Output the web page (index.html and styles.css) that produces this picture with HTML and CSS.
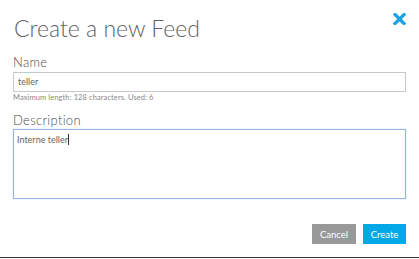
FILE: index.html
```html
<!DOCTYPE html>
<html>
<head>
<meta charset="utf-8">
<link rel="stylesheet" href="styles.css">
</head>
<body>
<div class="dialog">
  <div class="header">
    <h1 class="title">Create a new Feed</h1>
    <span class="close" aria-label="Close">
      <svg width="13" height="12" viewBox="0 0 13 12"><path d="M2 1.5 L11 10.5 M11 1.5 L2 10.5" stroke="#1aa3e0" stroke-width="3.2" stroke-linecap="square"/></svg>
    </span>
  </div>
  <label class="label">Name</label>
  <div class="input">teller</div>
  <div class="hint">Maximum length: 128 characters. Used: 6</div>
  <label class="label label-desc">Description</label>
  <div class="textarea">Interne teller<span class="caret"></span></div>
  <div class="actions">
    <button class="btn btn-cancel">Cancel</button>
    <button class="btn btn-create">Create</button>
  </div>
</div>
<div class="bottom-line"></div>
</body>
</html>
```

FILE: styles.css
```css
html, body {
  margin: 0;
  padding: 0;
  background: #fff;
}
body {
  width: 419px;
  height: 259px;
  position: relative;
  overflow: hidden;
  font-family: Lato, "Liberation Sans", sans-serif;
  color: #555;
}
.dialog {
  padding: 0 13px;
}
.header {
  display: flex;
  justify-content: space-between;
  align-items: flex-start;
  height: 54px;
}
.title {
  margin: 14px 0 0 1px;
  font-weight: 300;
  font-size: 23px;
  line-height: 28px;
  color: #5f5f5f;
  letter-spacing: 0;
}
.close {
  display: block;
  margin-top: 13px;
  width: 13px;
  height: 12px;
}
.close svg { display: block; }
.label {
  display: block;
  font-size: 13px;
  font-weight: 300;
  line-height: 16px;
  color: #4a4a4a;
  letter-spacing: 0.3px;
}
.input {
  box-sizing: border-box;
  margin-top: 2px;
  height: 20px;
  border: 1px solid #c8c8c8;
  font-size: 9px;
  line-height: 18px;
  padding: 0 4px;
  color: #666;
}
.hint {
  font-size: 7.5px;
  line-height: 10px;
  margin-top: 1px;
  color: #888;
  letter-spacing: 0.1px;
}
.label-desc {
  margin-top: 9px;
}
.textarea {
  box-sizing: border-box;
  margin-top: 1px;
  height: 70px;
  border: 1px solid #94b4e6;
  box-shadow: 0 0 1px #b7cdf0;
  font-size: 9px;
  line-height: 12px;
  padding: 4px 3px;
  color: #666;
}
.caret {
  display: inline-block;
  width: 1px;
  height: 11px;
  background: #333;
  vertical-align: -2px;
}
.actions {
  display: flex;
  justify-content: flex-end;
  gap: 7px;
  margin-top: 25px;
}
.btn {
  border: none;
  height: 20px;
  padding: 0;
  font-family: Lato, "Liberation Sans", sans-serif;
  font-size: 9.5px;
  color: #fff;
  cursor: pointer;
}
.btn-cancel {
  width: 44px;
  background: #999;
}
.btn-create {
  width: 43px;
  background: #02a9e6;
}
.bottom-line {
  position: absolute;
  left: 0;
  right: 0;
  bottom: 1px;
  height: 1px;
  background: #333;
}
```
